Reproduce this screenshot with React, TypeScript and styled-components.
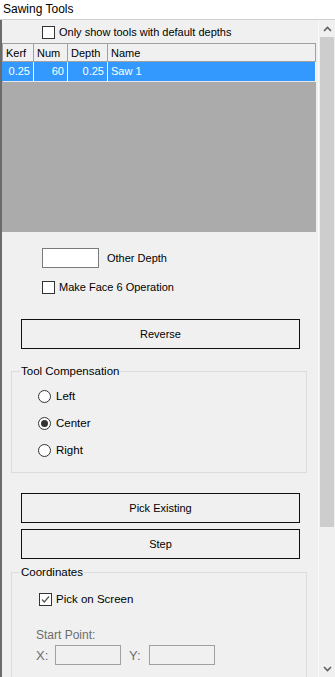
import React from 'react';
import styled, { createGlobalStyle } from 'styled-components';

const GlobalStyle = createGlobalStyle`
  html, body {
    margin: 0;
    padding: 0;
    background: #f0f0f0;
    overflow: hidden;
  }
  * {
    box-sizing: border-box;
  }
`;

const Window = styled.div`
  width: 335px;
  height: 677px;
  display: flex;
  flex-direction: column;
  font-family: 'Liberation Sans', Arial, sans-serif;
  font-size: 11px;
  color: #000;
  background: #f0f0f0;
`;

const TitleBar = styled.div`
  height: 20px;
  flex: none;
  line-height: 19px;
  padding-left: 3px;
  font-size: 12px;
  background: #fff;
  border-bottom: 1px solid #cfcfcf;
`;

const Body = styled.div`
  flex: 1;
  display: flex;
  min-height: 0;
`;

const Content = styled.div`
  flex: 1;
  display: flex;
  flex-direction: column;
  overflow: hidden;
  border-left: 2px solid #6b6b6b;
  padding-right: 2px;
  & > * {
    flex-shrink: 0;
  }
`;

const CheckRow = styled.div<{ $top: number; $left: number; $size?: number }>`
  display: flex;
  align-items: center;
  gap: 4px;
  height: 13px;
  flex-shrink: 0;
  margin-top: ${(p) => p.$top}px;
  padding-left: ${(p) => p.$left}px;
  line-height: 13px;
  font-size: ${(p) => p.$size ?? 11}px;
`;

const Box = styled.span`
  width: 13px;
  height: 13px;
  flex: none;
  border: 1px solid #333;
  background: #fff;
  display: flex;
  align-items: center;
  justify-content: center;
`;

const Table = styled.div`
  margin-top: 4px;
  height: 189px;
  background: #ababab;
  display: flex;
  flex-direction: column;
`;

const Row = styled.div<{ $head?: boolean }>`
  display: flex;
  flex: none;
  height: ${(p) => (p.$head ? 19 : 20)}px;
  background: ${(p) => (p.$head ? '#f0f0f0' : '#3399ff')};
  color: ${(p) => (p.$head ? '#000' : '#fff')};
  border-top: ${(p) => (p.$head ? '1px solid #a0a0a0' : 'none')};
  border-bottom: 1px solid ${(p) => (p.$head ? '#a0a0a0' : '#e6e6e6')};
  border-left: 1px solid ${(p) => (p.$head ? '#a0a0a0' : '#3399ff')};
`;

const Cell = styled.div<{ $w?: number; $right?: boolean; $head?: boolean }>`
  width: ${(p) => (p.$w ? `${p.$w}px` : 'auto')};
  flex: ${(p) => (p.$w ? 'none' : '1')};
  border-right: 1px solid ${(p) => (p.$head ? '#a0a0a0' : '#ffffff')};
  text-align: ${(p) => (p.$right ? 'right' : 'left')};
  padding: 0 3px;
  line-height: 18px;
  white-space: nowrap;
`;

const DepthRow = styled.div`
  display: flex;
  align-items: center;
  gap: 8px;
  margin-top: 16px;
  padding-left: 40px;
`;

const TextBox = styled.div<{ $w: number; $disabled?: boolean }>`
  width: ${(p) => p.$w}px;
  height: 20px;
  flex: none;
  background: ${(p) => (p.$disabled ? '#f0f0f0' : '#fff')};
  border: 1px solid ${(p) => (p.$disabled ? '#a0a0a0' : '#7a7a7a')};
`;

const Button = styled.div<{ $top: number }>`
  height: 30px;
  margin: ${(p) => p.$top}px 16px 0 19px;
  border: 1px solid #101010;
  background: #f0f0f0;
  display: flex;
  align-items: center;
  justify-content: center;
`;

const Group = styled.fieldset<{ $top: number; $height?: number }>`
  margin: ${(p) => p.$top}px 9px 0 9px;
  padding: 0;
  min-inline-size: 0;
  border: 1px solid #dcdcdc;
  height: ${(p) => (p.$height ? `${p.$height}px` : 'auto')};
`;

const Legend = styled.legend`
  margin-left: 8px;
  padding: 0 1px;
  line-height: 13px;
  font-size: 11.5px;
`;

const RadioList = styled.div`
  display: flex;
  flex-direction: column;
  gap: 15px;
  padding: 12px 0 0 26px;
`;

const RadioRow = styled.div`
  display: flex;
  align-items: center;
  gap: 5px;
  height: 12px;
  line-height: 12px;
  font-size: 11.5px;
`;

const Circle = styled.span<{ $on?: boolean }>`
  width: 13px;
  height: 13px;
  flex: none;
  border-radius: 50%;
  border: 1px solid #333;
  background: #fff;
  display: flex;
  align-items: center;
  justify-content: center;
  &::after {
    content: '';
    width: 7px;
    height: 7px;
    border-radius: 50%;
    background: ${(p) => (p.$on ? '#333' : 'transparent')};
  }
`;

const Coords = styled.div`
  display: flex;
  flex-direction: column;
  padding: 14px 0 0 0;
`;

const Muted = styled.div`
  color: #6d6d6d;
  line-height: 13px;
  padding-left: 24px;
  margin-top: 23px;
  font-size: 12px;
`;

const PointRow = styled.div`
  display: flex;
  align-items: center;
  margin-top: 3px;
  padding-left: 24px;
  color: #6d6d6d;
  font-size: 13px;
`;

const AxisLabel = styled.span<{ $w: number; $gap?: number }>`
  width: ${(p) => p.$w}px;
  padding-left: ${(p) => p.$gap ?? 0}px;
  flex: none;
`;

const Scrollbar = styled.div`
  width: 17px;
  flex: none;
  display: flex;
  flex-direction: column;
  background: #f0f0f0;
  border-left: 1px solid #fafafa;
`;

const ArrowBtn = styled.div`
  height: 17px;
  flex: none;
  display: flex;
  align-items: center;
  justify-content: center;
`;

const Track = styled.div`
  flex: 1;
  display: flex;
  flex-direction: column;
  padding: 0 1px;
`;

const Thumb = styled.div`
  height: 490px;
  background: #cdcdcd;
`;

const Chevron = ({ up }: { up?: boolean }) => (
  <svg width="9" height="6" viewBox="0 0 9 6">
    <polyline
      points={up ? '1,5 4.5,1.5 8,5' : '1,1 4.5,4.5 8,1'}
      fill="none"
      stroke="#606060"
      strokeWidth="1.6"
    />
  </svg>
);

const Check = () => (
  <svg width="11" height="11" viewBox="0 0 11 11">
    <polyline points="2,5.5 4.3,8 9,2.5" fill="none" stroke="#555" strokeWidth="1.2" />
  </svg>
);

const columns = [
  { name: 'Kerf', width: 31, value: '0.25', right: true },
  { name: 'Num', width: 34, value: '60', right: true },
  { name: 'Depth', width: 40, value: '0.25', right: true },
  { name: 'Name', width: 0, value: 'Saw 1', right: false },
];

const radios = [
  { label: 'Left', on: false },
  { label: 'Center', on: true },
  { label: 'Right', on: false },
];

export default function App() {
  return (
    <>
      <GlobalStyle />
      <Window>
        <TitleBar>Sawing Tools</TitleBar>
        <Body>
          <Content>
            <CheckRow $top={6} $left={40}>
              <Box />
              <span>Only show tools with default depths</span>
            </CheckRow>

            <Table>
              <Row $head>
                {columns.map((c) => (
                  <Cell key={c.name} $w={c.width} $head>
                    {c.name}
                  </Cell>
                ))}
              </Row>
              <Row>
                {columns.map((c) => (
                  <Cell key={c.name} $w={c.width} $right={c.right}>
                    {c.value}
                  </Cell>
                ))}
              </Row>
            </Table>

            <DepthRow>
              <TextBox $w={57} />
              <span>Other Depth</span>
            </DepthRow>

            <CheckRow $top={13} $left={40}>
              <Box />
              <span>Make Face 6 Operation</span>
            </CheckRow>

            <Button $top={25}>Reverse</Button>

            <Group $top={16} $height={108}>
              <Legend>Tool Compensation</Legend>
              <RadioList>
                {radios.map((r) => (
                  <RadioRow key={r.label}>
                    <Circle $on={r.on} />
                    <span>{r.label}</span>
                  </RadioRow>
                ))}
              </RadioList>
            </Group>

            <Button $top={20}>Pick Existing</Button>
            <Button $top={6}>Step</Button>

            <Group $top={7}>
              <Legend>Coordinates</Legend>
              <Coords>
                <CheckRow $top={0} $left={27} $size={11.5}>
                  <Box>
                    <Check />
                  </Box>
                  <span>Pick on Screen</span>
                </CheckRow>
                <Muted>Start Point:</Muted>
                <PointRow>
                  <AxisLabel $w={19}>X:</AxisLabel>
                  <TextBox $w={66} $disabled />
                  <AxisLabel $w={28} $gap={8}>
                    Y:
                  </AxisLabel>
                  <TextBox $w={66} $disabled />
                </PointRow>
                <div style={{ height: 40 }} />
              </Coords>
            </Group>
          </Content>
          <Scrollbar>
            <ArrowBtn>
              <Chevron up />
            </ArrowBtn>
            <Track>
              <Thumb />
            </Track>
            <ArrowBtn>
              <Chevron />
            </ArrowBtn>
          </Scrollbar>
        </Body>
      </Window>
    </>
  );
}
